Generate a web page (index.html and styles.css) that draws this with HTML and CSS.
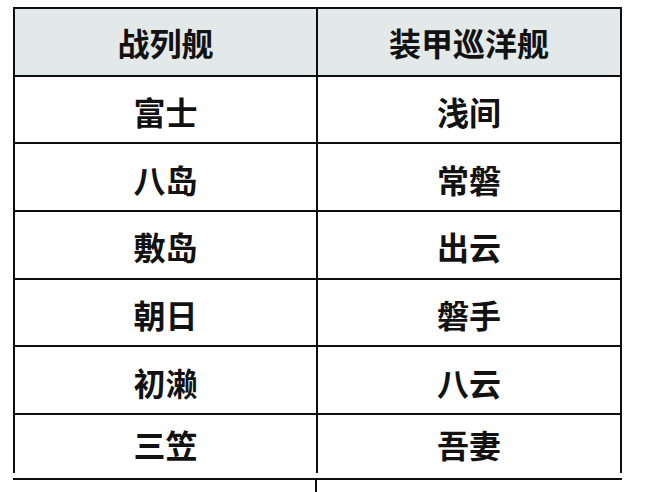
FILE: index.html
```html
<!DOCTYPE html>
<html lang="zh">
<head>
<meta charset="utf-8">
<link rel="stylesheet" href="styles.css">
</head>
<body>
<div class="page">
  <div class="grid">
    <div class="cell head">战列舰</div>
    <div class="cell head">装甲巡洋舰</div>
    <div class="cell">富士</div>
    <div class="cell">浅间</div>
    <div class="cell">八岛</div>
    <div class="cell">常磐</div>
    <div class="cell">敷岛</div>
    <div class="cell">出云</div>
    <div class="cell">朝日</div>
    <div class="cell">磐手</div>
    <div class="cell">初濑</div>
    <div class="cell">八云</div>
    <div class="cell last">三笠</div>
    <div class="cell last">吾妻</div>
  </div>
  <div class="next">
    <div class="next-cell"></div>
    <div class="next-cell"></div>
  </div>
</div>
</body>
</html>
```
FILE: styles.css
```css
html, body {
  margin: 0;
  padding: 0;
  background: #ffffff;
}
.page {
  padding: 7px 0 0 13px;
  width: 609px;
}
.grid {
  display: grid;
  grid-template-columns: 303px 304px;
  border-top: 2px solid #0e0e0e;
  border-left: 2px solid #0e0e0e;
}
.cell {
  box-sizing: border-box;
  height: 67.7px;
  border-bottom: 2px solid #0e0e0e;
  border-right: 2px solid #0e0e0e;
  display: flex;
  align-items: center;
  justify-content: center;
  font-family: "Noto Sans CJK SC", "Noto Sans", sans-serif;
  font-weight: 700;
  font-size: 32px;
  color: #121212;
  padding-top: 3px;
}
.head {
  background: #e3e8e8;
  padding-top: 0;
}
.last {
  border-bottom: none;
  height: 58px;
  padding-top: 0;
}
.next {
  margin-top: 5px;
  display: grid;
  grid-template-columns: 304px 305px;
  border-top: 2px solid #0e0e0e;
  height: 12px;
}
.next-cell:first-child {
  border-right: 2px solid #0e0e0e;
}
```
